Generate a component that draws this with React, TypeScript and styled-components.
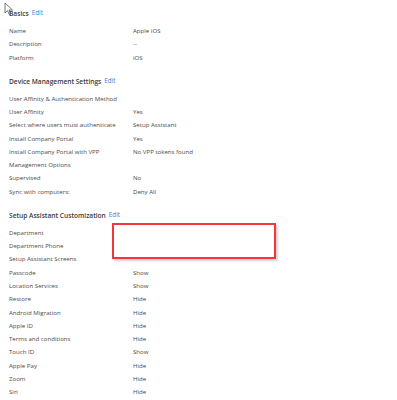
import React from 'react';
import styled, { createGlobalStyle } from 'styled-components';

const GlobalStyle = createGlobalStyle`
  html, body {
    margin: 0;
    padding: 0;
    background: #ffffff;
  }
  body {
    font-family: "Open Sans", "Noto Sans", sans-serif;
  }
`;

const Page = styled.div`
  position: relative;
  width: 397px;
  height: 400px;
  overflow: hidden;
  padding: 8px 0 0 9px;
  box-sizing: border-box;
  display: flex;
  flex-direction: column;
  gap: 12px;
`;

const Cursor = styled.svg`
  position: absolute;
  left: 4px;
  top: 2px;
`;

const Section = styled.section`
  position: relative;
  display: flex;
  flex-direction: column;
`;

const Header = styled.div`
  height: 12px;
  line-height: 12px;
  padding-bottom: 3.8px;
  display: flex;
  align-items: flex-start;
  gap: 3px;
`;

const Title = styled.span`
  font-size: 6.6px;
  font-weight: 600;
  color: #3a3a3a;
`;

const EditLink = styled.a`
  font-size: 6.3px;
  line-height: 9px;
  color: #2b88d8;
  text-decoration: none;
`;

const Row = styled.div`
  display: grid;
  grid-template-columns: 124px 1fr;
  height: 13.3px;
  align-items: center;
  font-size: 6.1px;
  color: #4a4a4a;
`;

const Label = styled.span`
  white-space: nowrap;
`;

const Value = styled.span`
  white-space: nowrap;
`;

const Highlight = styled.div`
  position: absolute;
  left: 103px;
  top: 13.5px;
  width: 160px;
  height: 32px;
  border: 2px solid #f2363b;
  box-shadow: 2px 2px 2px rgba(0, 0, 0, 0.18);
`;

type Item = [string, string?];

const basics: Item[] = [
  ['Name', 'Apple iOS'],
  ['Description', '--'],
  ['Platform', 'iOS'],
];

const device: Item[] = [
  ['User Affinity & Authentication Method'],
  ['User Affinity', 'Yes'],
  ['Select where users must authenticate', 'Setup Assistant'],
  ['Install Company Portal', 'Yes'],
  ['Install Company Portal with VPP', 'No VPP tokens found'],
  ['Management Options'],
  ['Supervised', 'No'],
  ['Sync with computers:', 'Deny All'],
];

const setup: Item[] = [
  ['Department'],
  ['Department Phone'],
  ['Setup Assistant Screens'],
  ['Passcode', 'Show'],
  ['Location Services', 'Show'],
  ['Restore', 'Hide'],
  ['Android Migration', 'Hide'],
  ['Apple ID', 'Hide'],
  ['Terms and conditions', 'Hide'],
  ['Touch ID', 'Show'],
  ['Apple Pay', 'Hide'],
  ['Zoom', 'Hide'],
  ['Siri', 'Hide'],
];

const Block: React.FC<{ title: string; items: Item[]; children?: React.ReactNode }> = ({ title, items, children }) => (
  <Section>
    <Header>
      <Title>{title}</Title>
      <EditLink href="#">Edit</EditLink>
    </Header>
    {items.map(([label, value]) => (
      <Row key={label}>
        <Label>{label}</Label>
        <Value>{value ?? ''}</Value>
      </Row>
    ))}
    {children}
  </Section>
);

export default function App() {
  return (
    <>
      <GlobalStyle />
      <Page>
        <Cursor width="10" height="14" viewBox="0 0 10 14">
          <path d="M1 1 L1 11 L3.5 8.6 L5.2 12.5 L6.8 11.8 L5.1 8 L8.5 8 Z" fill="#ffffff" stroke="#555555" strokeWidth="0.8" strokeLinejoin="round" />
        </Cursor>
        <Block title="Basics" items={basics} />
        <Block title="Device Management Settings" items={device} />
        <Block title="Setup Assistant Customization" items={setup}>
          <Highlight />
        </Block>
      </Page>
    </>
  );
}
